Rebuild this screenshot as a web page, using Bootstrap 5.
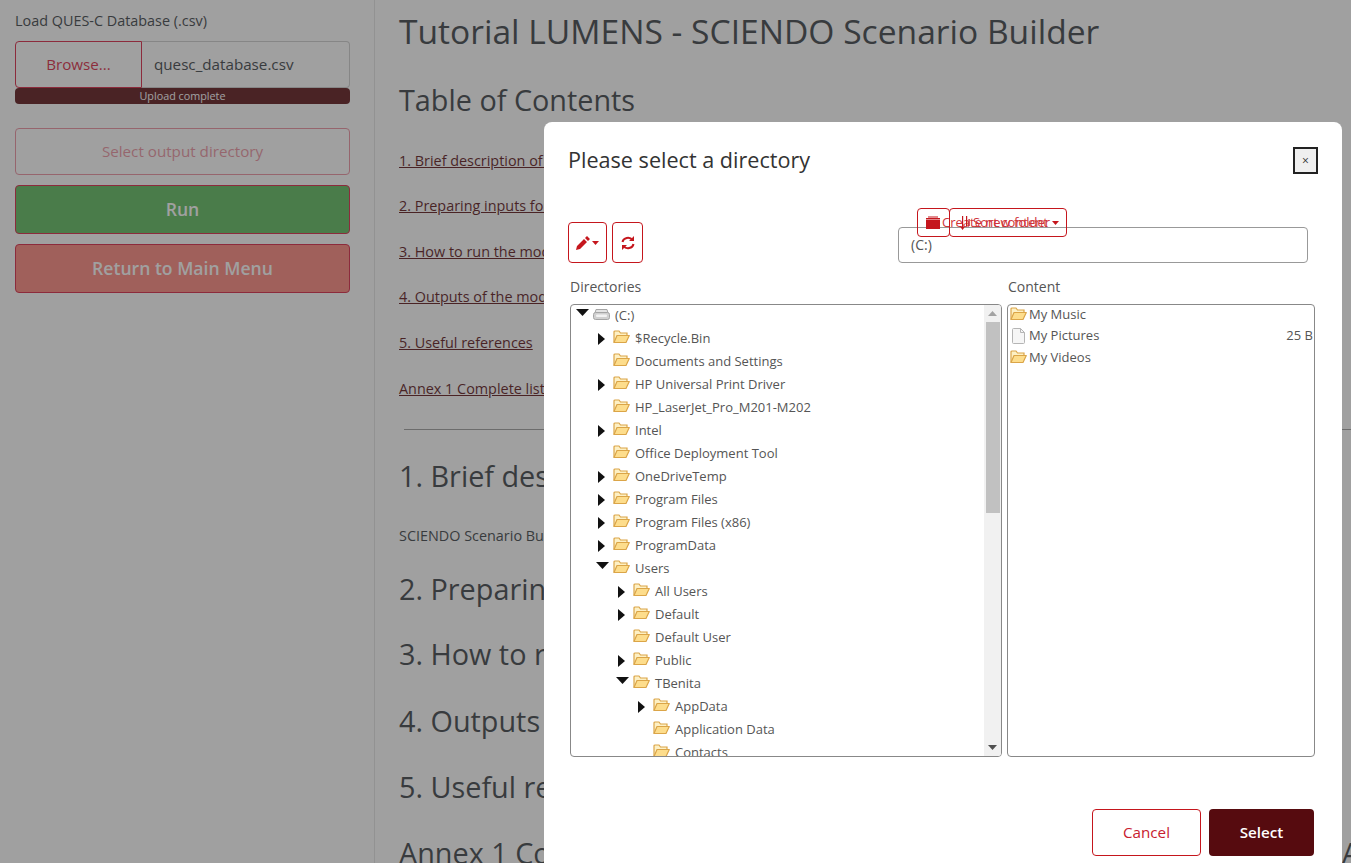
<!DOCTYPE html>
<html lang="en">
<head>
    <meta charset="UTF-8">
    <meta name="viewport" content="width=device-width, initial-scale=1.0">
    <link rel="stylesheet" href="https://cdn.jsdelivr.net/npm/bootstrap@5.3.2/dist/css/bootstrap.min.css">
    <style>
        html, body { height: 100%; overflow: hidden; }
        body { font-family: "Open Sans", "Liberation Sans", sans-serif; font-size: 14.4px; color: #343a40; background: #fff; }
        .page-wrap { height: 863px; overflow: hidden; }
        .side-panel { width: 375px; flex: none; height: 863px; padding: 12px 24px 0 15px; background: #fff; border-right: 1px solid #e4e4e4; }
        .side-label { font-size: 14.4px; line-height: 18px; margin-bottom: 11px; }
        .browse-group { height: 47px; font-size: 15.2px; }
        .browse-btn { width: 127px; border: 1px solid #d81b3c; color: #d81b3c; border-radius: 4px 0 0 4px; display: flex; align-items: center; justify-content: center; }
        .browse-name { flex: 1; border: 1px solid #ccc; border-left: 0; border-radius: 0 4px 4px 0; padding: 0 12px; display: flex; align-items: center; }
        .upload-bar { height: 16px; background: #560b0f; color: #fff; font-size: 10.8px; line-height: 16px; text-align: center; border-radius: 4px; margin-bottom: 24px; }
        .side-btn { display: block; width: 100%; border-radius: 4px; text-align: center; font-weight: 600; font-size: 17.6px; margin-bottom: 10px; }
        .btn-outdir { height: 47px; line-height: 45px; border: 1px solid #d81b3c; color: #d81b3c; opacity: .5; font-size: 15.2px; font-weight: 400; }
        .btn-run { height: 49px; line-height: 47px; background: #56b856; border: 1px solid #d81b3c; color: #fff; }
        .btn-return { height: 49px; line-height: 47px; background: #ff8178; border: 1px solid #d81b3c; color: #fff; }
        .doc-panel { flex: 1; padding: 0 0 0 24px; min-width: 0; white-space: nowrap; }
        .doc-title { font-size: 33.6px; font-weight: 400; line-height: 44px; margin: 9px 0 0; }
        .doc-h2 { font-size: 28.8px; font-weight: 400; line-height: 40px; margin: 0; }
        .doc-link { font-size: 14.4px; line-height: 20px; margin: 0; color: #560b0f; text-decoration: underline; display: block; }
        .doc-text { font-size: 14.4px; line-height: 20px; margin: 0; }
        .doc-rule { margin: 30px 0 0 5px; border: 0; border-top: 1px solid #999; opacity: 1; }
        .overlay-shade { position: fixed; inset: 0; background: #3d3d3d; opacity: .49; z-index: 10; }
        .dir-dialog { position: fixed; left: 544px; top: 122px; width: 798px; height: 800px; background: #fff; border-radius: 8px; z-index: 20; padding: 0 24px; color: #555; }
        .dir-head { height: 56px; padding-top: 23px; display: flex; justify-content: space-between; align-items: flex-start; }
        .dir-title { font-size: 21.6px; line-height: 29px; font-weight: 400; margin: 0; color: #333; }
        .dir-close { width: 25px; height: 27px; margin: 2px 0 0 0; background: #efefef; border: 2px solid #222; padding: 0; font-size: 12px; line-height: 20px; color: #333; }
        .dir-tools { position: relative; margin-top: 44px; height: 41px; display: flex; gap: 5px; }
        .tool-btn { height: 41px; border: 1px solid #c5161d; border-radius: 4px; background: #fff; color: #c5161d; display: flex; align-items: center; justify-content: center; padding: 0; }
        .tool-pencil { width: 39px; gap: 2px; }
        .tool-refresh { width: 31px; }
        .path-box { position: absolute; left: 330px; top: 5px; width: 410px; height: 36px; border: 1px solid #999; border-radius: 4px; padding: 0 12px; line-height: 34px; font-size: 14px; }
        .float-btn { position: absolute; top: -14px; height: 29px; border: 1px solid #c5161d; border-radius: 4px; color: #d0343a; font-size: 13px; line-height: 27px; white-space: nowrap; display: flex; align-items: center; }
        .float-create { left: 349px; width: 33px; padding-left: 8px; gap: 2px; }
        .float-sort { left: 381px; width: 118px; padding-left: 10px; gap: 3px; }
        .dir-labels { display: flex; margin-top: 14px; height: 20px; line-height: 20px; padding-left: 2px; font-size: 14px; }
        .dir-labels > div:first-child { width: 438px; }
        .dir-panels { display: flex; gap: 5px; margin: 7px 0 0 2px; height: 453px; }
        .tree-box { width: 432px; border: 1px solid #888; border-radius: 4px; display: flex; overflow: hidden; }
        .tree-rows { flex: 1; overflow: hidden; margin-top: -1px; font-size: 13px; }
        .tree-row { height: 23px; display: flex; align-items: center; white-space: nowrap; }
        .tree-row svg { flex: none; }
        .tree-row .icon-up { margin-top: -3px; }
        .arrow-slot { width: 20px; flex: none; display: flex; justify-content: center; margin-left: -2px; margin-right: 2px; }
        .arrow-slot .arrow-open { margin: -7px 0 0 2px; }
        .tree-name { margin-left: 5px; }
        .fake-scroll { width: 17px; flex: none; background: #f1f1f1; display: flex; flex-direction: column; align-items: center; }
        .scroll-arrow { height: 17px; display: flex; align-items: center; justify-content: center; }
        .scroll-thumb { width: 14px; height: 191px; background: #c1c1c1; }
        .content-box { width: 308px; border: 1px solid #888; border-radius: 4px; font-size: 13px; overflow: hidden; padding: 0 1px 0 2px; }
        .content-rows-inner { margin-top: -1.5px; }
        .content-row { height: 21.5px; display: flex; align-items: center; gap: 2px; }
        .content-icon { width: 17px; flex: none; display: flex; justify-content: center; }
        .dir-foot { display: flex; justify-content: flex-end; gap: 8px; margin-top: 52px; padding-right: 4px; font-size: 15.2px; }
        .foot-cancel { width: 109px; height: 47px; border: 1px solid #c5161d; border-radius: 4px; color: #c8202e; background: #fff; }
        .foot-select { width: 105px; height: 47px; border: 0; border-radius: 4px; color: #fff; background: #560b0f; font-weight: 600; }
    </style>
</head>
<body>

    <div class="page-wrap d-flex">
        <div class="side-panel">
            <div class="side-label">Load QUES-C Database (.csv)</div>
            <div class="browse-group d-flex">
                <div class="browse-btn">Browse...</div>
                <div class="browse-name">quesc_database.csv</div>
            </div>
            <div class="upload-bar">Upload complete</div>
            <div class="side-btn btn-outdir">Select output directory</div>
            <div class="side-btn btn-run">Run</div>
            <div class="side-btn btn-return">Return to Main Menu</div>
        </div>
        <div class="doc-panel">
            <h1 class="doc-title">Tutorial LUMENS - SCIENDO Scenario Builder</h1>
            <h2 class="doc-h2" style="margin-top:27px">Table of Contents</h2>
            <a class="doc-link" style="margin-top:31px">1. Brief description of SCIENDO Scenario Builder</a>
            <a class="doc-link" style="margin-top:25px">2. Preparing inputs for the model</a>
            <a class="doc-link" style="margin-top:26px">3. How to run the model</a>
            <a class="doc-link" style="margin-top:25px">4. Outputs of the model</a>
            <a class="doc-link" style="margin-top:26px">5. Useful references</a>
            <a class="doc-link" style="margin-top:26px">Annex 1 Complete list of parameters</a>
            <hr class="doc-rule">
            <h2 class="doc-h2" style="margin-top:26px">1. Brief description</h2>
            <p class="doc-text" style="margin-top:30px">SCIENDO Scenario Builder</p>
            <h2 class="doc-h2" style="margin-top:23px">2. Preparing inputs</h2>
            <h2 class="doc-h2" style="margin-top:25px">3. How to run</h2>
            <h2 class="doc-h2" style="margin-top:27px">4. Outputs of the model</h2>
            <h2 class="doc-h2" style="margin-top:26px">5. Useful references</h2>
            <h2 class="doc-h2" style="margin-top:26px">Annex 1 Complete list of parameters and descriptions in LUMENS tool A</h2>
        </div>
    </div>

    <div class="overlay-shade"></div>

    <div class="dir-dialog">
        <div class="dir-head">
            <h4 class="dir-title">Please select a directory</h4>
            <button class="dir-close">×</button>
        </div>

        <div class="dir-tools">
            <button class="tool-btn tool-pencil">
                <svg width="14" height="14" viewBox="0 0 14 14"><path d="M0 14l1-4 7-7 3 3-7 7zM9 2l2-2 3 3-2 2z" fill="#c5161d"/></svg>
                <svg width="7" height="4" viewBox="0 0 7 4"><path d="M0 0h7L3.500 4z" fill="#c5161d"/></svg>
            </button>
            <button class="tool-btn tool-refresh">
                <svg width="14" height="14" viewBox="0 0 14 14" fill="none" stroke="#c5161d" stroke-width="2"><path d="M1.500 6a5.500 5 0 0 1 10-2"/><path d="M12.500 8a5.500 5 0 0 1-10 2"/><path d="M13 0v5H8zM1 14V9h5z" fill="#c5161d" stroke="none"/></svg>
            </button>
            <div class="path-box">(C:)</div>
            <div class="float-btn float-create">
                <svg width="14" height="13" viewBox="0 0 14 13" style="flex:none"><path d="M0 3.500h14V13H0zM0 2h14v1H0zM2 .5h10v1H2z" fill="#c5161d"/></svg>
                <span>Create new folder</span>
            </div>
            <div class="float-btn float-sort">
                <svg width="10" height="14" viewBox="0 0 10 14" fill="#c5161d" style="flex:none"><path d="M2 0h1.200v10.500H5L2.600 14 0 10.500h2zM6 0h1.200v10H6zM8.500 3h1.200v7H8.500z"/></svg>
                <span>Sort content</span>
                <svg width="7" height="4" viewBox="0 0 7 4" style="margin-left:1px"><path d="M0 0h7L3.500 4z" fill="#c5161d"/></svg>
            </div>
        </div>

        <div class="dir-labels"><div>Directories</div><div>Content</div></div>

        <div class="dir-panels">
            <div class="tree-box">
                <div class="tree-rows" id="treeRows"></div>
                <div class="fake-scroll">
                    <div class="scroll-arrow"><svg width="9" height="5" viewBox="0 0 9 5"><path d="M0 5h9L4.500 0z" fill="#a3a3a3"/></svg></div>
                    <div class="scroll-thumb"></div>
                    <div class="flex-grow-1"></div>
                    <div class="scroll-arrow"><svg width="9" height="5" viewBox="0 0 9 5"><path d="M0 0h9L4.500 5z" fill="#505050"/></svg></div>
                </div>
            </div>
            <div class="content-box"><div class="content-rows-inner" id="contentRows"></div></div>
        </div>

        <div class="dir-foot">
            <button class="foot-cancel">Cancel</button>
            <button class="foot-select">Select</button>
        </div>
    </div>

    <script>
        const folderIcon = `<svg class="icon-up" width="17" height="14" viewBox="0 0 17 14"><path d="M1 12.500V2a1 1 0 0 1 1-1h4l1.500 2H14v2.500" fill="#fdf0c4" stroke="#dba548" stroke-width="1.200"/><path d="M1 12.500l3-7h12.300l-3.300 7z" fill="#fddd8c" stroke="#dba548" stroke-width="1.200" stroke-linejoin="round"/></svg>`;
        const fileIcon = `<svg width="13" height="16" viewBox="0 0 13 16"><path d="M.5 1.500a1 1 0 0 1 1-1h7l4 4v10a1 1 0 0 1-1 1h-10a1 1 0 0 1-1-1z" fill="#f6f6f6" stroke="#b5b5b5"/><path d="M8.500.5v4h4" fill="none" stroke="#b5b5b5"/></svg>`;
        const driveIcon = `<svg class="icon-up" width="17" height="11" viewBox="0 0 17 11"><path d="M2 4l1-3.500h11L15 4" fill="#e4e4e4" stroke="#a5a5a5"/><rect x=".5" y="3.500" width="16" height="7" rx="2" fill="#d0d0d0" stroke="#a5a5a5"/><rect x="3" y="5.500" width="11" height="2.500" rx="1" fill="#f2f2f2"/></svg>`;
        const arrowOpen = `<svg class="arrow-open" width="13" height="7" viewBox="0 0 13 7"><path d="M0 0h13L6.500 7z" fill="#111"/></svg>`;
        const arrowShut = `<svg width="7" height="12" viewBox="0 0 7 12"><path d="M0 0l7 6-7 6z" fill="#111"/></svg>`;

        // level, name, arrow state (o = open, s = shut, '' = none)
        const treeData = [
            [0, '(C:)', 'o'], [1, '$Recycle.Bin', 's'], [1, 'Documents and Settings', ''],
            [1, 'HP Universal Print Driver', 's'], [1, 'HP_LaserJet_Pro_M201-M202', ''], [1, 'Intel', 's'],
            [1, 'Office Deployment Tool', ''], [1, 'OneDriveTemp', 's'], [1, 'Program Files', 's'],
            [1, 'Program Files (x86)', 's'], [1, 'ProgramData', 's'], [1, 'Users', 'o'],
            [2, 'All Users', 's'], [2, 'Default', 's'], [2, 'Default User', ''], [2, 'Public', 's'],
            [2, 'TBenita', 'o'], [3, 'AppData', 's'], [3, 'Application Data', ''], [3, 'Contacts', '']
        ];

        document.getElementById('treeRows').innerHTML = treeData.map(([level, name, state]) => {
            const arrow = state === 'o' ? arrowOpen : state === 's' ? arrowShut : '';
            const icon = level === 0 ? driveIcon : folderIcon;
            return `<div class="tree-row" style="padding-left:${level * 20 + 2}px">
                <span class="arrow-slot">${arrow}</span>${icon}<span class="tree-name">${name}</span></div>`;
        }).join('');

        document.getElementById('contentRows').innerHTML = [
            [folderIcon, 'My Music', ''], [fileIcon, 'My Pictures', '25 B'], [folderIcon, 'My Videos', '']
        ].map(([icon, name, size]) =>
            `<div class="content-row"><span class="content-icon">${icon}</span><span class="flex-grow-1">${name}</span><span>${size}</span></div>`
        ).join('');
    </script>

</body>
</html>
